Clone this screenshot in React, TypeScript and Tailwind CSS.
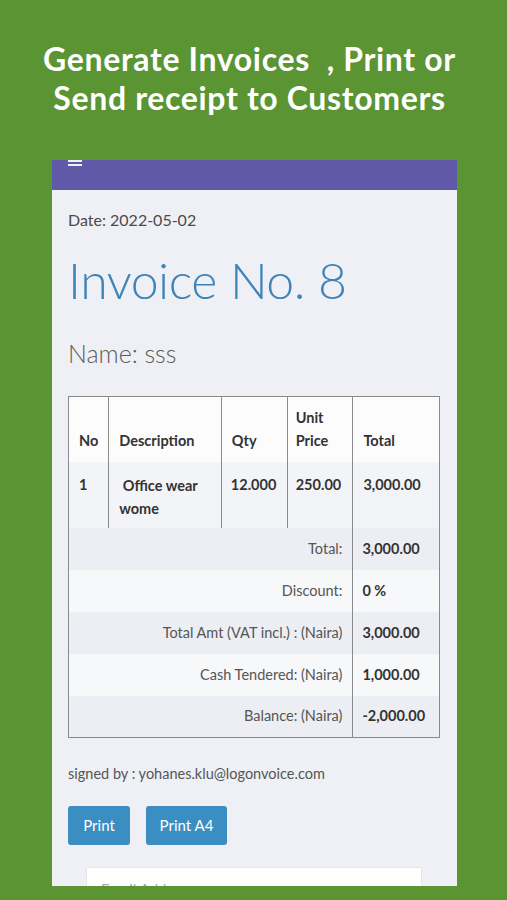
import React from "react";

const rows = [
  { label: "Total:", value: "3,000.00", shade: true },
  { label: "Discount:", value: "0 %", shade: false },
  { label: "Total Amt (VAT incl.) : (Naira)", value: "3,000.00", shade: true },
  { label: "Cash Tendered: (Naira)", value: "1,000.00", shade: false },
  { label: "Balance: (Naira)", value: "-2,000.00", shade: true },
];

export default function App() {
  return (
    <div className="w-[507px] h-[900px] bg-[#5b9433] overflow-hidden flex flex-col items-center" style={{ fontFamily: "Lato, 'Noto Sans', sans-serif" }}>
      {/* Headline */}
      <div className="h-[160px] flex flex-col items-center justify-center pb-[4px] pr-[8px] text-white font-bold text-[32px] leading-[39px] tracking-[0.65px]">
        <div>Generate Invoices&nbsp;&nbsp;, Print or</div>
        <div>Send receipt to Customers</div>
      </div>

      {/* Phone screen */}
      <div className="w-[405px] h-[726px] ml-[2px] bg-[#eef0f6] overflow-hidden flex flex-col">
        {/* Top bar */}
        <div className="h-[30px] bg-[#6059a8] px-[16px] shrink-0">
          <div className="w-[14px] flex flex-col gap-[2px]">
            <div className="h-[2px] bg-white/90" />
            <div className="h-[2px] bg-white/90" />
          </div>
        </div>

        <div className="px-[16px] flex flex-col">
          <div className="mt-[19px] text-[16px] leading-[22px] text-[#4a4a4a]">Date: 2022-05-02</div>
          <div className="mt-[17px] text-[50px] leading-[64px] font-light text-[#3f84b8] tracking-[-0.5px]">Invoice No. 8</div>
          <div className="mt-[26px] text-[25px] leading-[30px] font-light text-[#5c5c5c]">Name: sss</div>

          {/* Table */}
          <table className="mt-[28px] w-[372px] border-collapse border border-[#8a8a8a] text-[14.5px] text-[#333] font-bold">
            <colgroup>
              <col className="w-[39px]" />
              <col className="w-[114px]" />
              <col className="w-[66px]" />
              <col className="w-[66px]" />
              <col className="w-[87px]" />
            </colgroup>
            <thead>
              <tr className="h-[65px] bg-[#fcfcfd]">
                <th className="border-x border-[#8a8a8a] px-[10px] pb-[10px] align-bottom text-left">No</th>
                <th className="border-x border-[#8a8a8a] px-[10px] pb-[10px] align-bottom text-left">Description</th>
                <th className="border-x border-[#8a8a8a] px-[10px] pb-[10px] align-bottom text-left">Qty</th>
                <th className="border-x border-[#8a8a8a] px-[8px] pb-[10px] align-bottom text-left leading-[23px]">Unit<br />Price</th>
                <th className="border-x border-[#8a8a8a] px-[10px] pb-[10px] align-bottom text-left">Total</th>
              </tr>
            </thead>
            <tbody>
              <tr className="h-[66px] bg-[#f3f4f7]">
                <td className="border-x border-[#8a8a8a] px-[10px] pt-[12px] align-top">1</td>
                <td className="border-x border-[#8a8a8a] px-[10px] pt-[12px] align-top leading-[23px]">&nbsp;Office wear<br />wome</td>
                <td className="border-x border-[#8a8a8a] px-[9px] pt-[12px] align-top">12.000</td>
                <td className="border-x border-[#8a8a8a] px-[8px] pt-[12px] align-top">250.00</td>
                <td className="border-x border-[#8a8a8a] px-[10px] pt-[12px] align-top">3,000.00</td>
              </tr>
              {rows.map((r) => (
                <tr key={r.label} className={`h-[42px] ${r.shade ? "bg-[#eceef3]" : "bg-[#f7f8fa]"}`}>
                  <td colSpan={4} className="border-r border-[#8a8a8a] px-[10px] text-right font-normal text-[#555]">{r.label}</td>
                  <td className="px-[9px]">{r.value}</td>
                </tr>
              ))}
            </tbody>
          </table>

          <div className="mt-[25px] text-[14.5px] text-[#555]">signed by : yohanes.klu@logonvoice.com</div>

          <div className="mt-[21px] flex gap-[16px]">
            <button className="h-[39px] w-[62px] rounded-[3px] bg-[#3a8ec2] text-white text-[15px]">Print</button>
            <button className="h-[39px] w-[81px] rounded-[3px] bg-[#3a8ec2] text-white text-[15px]">Print A4</button>
          </div>

          <div className="mt-[22px] ml-[18px] w-[336px] h-[40px] bg-white border border-[#e3e5ea] rounded-[2px] px-[14px] pt-[10px] text-[15px] text-[#aaa]">Email Address</div>
        </div>
      </div>
    </div>
  );
}
